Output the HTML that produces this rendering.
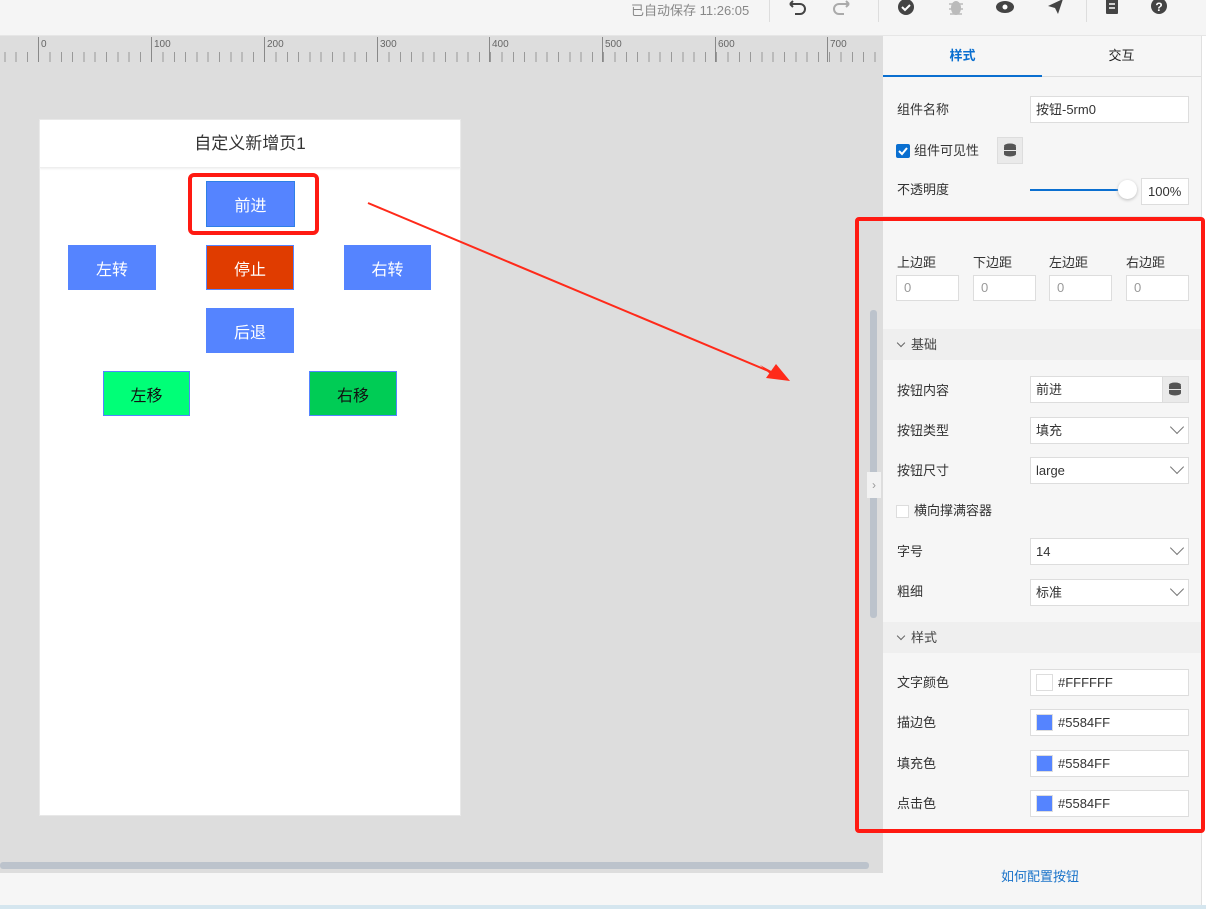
<!DOCTYPE html>
<html><head><meta charset="utf-8"><style>
*{box-sizing:border-box;margin:0;padding:0}
body{width:1206px;height:909px;overflow:hidden;position:relative;background:#dddddd;font-family:"Liberation Sans","Noto Sans CJK SC",sans-serif;font-size:13px;color:#333}
.a{position:absolute}
.top{left:0;top:0;width:1206px;height:36px;background:#f5f5f5;border-bottom:1px solid #e6e6e6}
.ruler{left:0;top:37px;width:883px;height:26px;background:#dddddd}
.btn{position:absolute;color:#fff;font-size:16px;display:flex;align-items:center;justify-content:center;background:#5584ff}
.panel{left:883px;top:36px;width:318px;height:869px;background:#f6f6f6}
.lbl{position:absolute;left:897px;font-size:13px;color:#333}
.inp{position:absolute;left:1030px;width:159px;height:27px;background:#fff;border:1px solid #ddd;font-size:13px;padding-left:5px;line-height:25px;color:#333}
.chev{position:absolute;right:6px;width:10px;height:10px;border-right:1.5px solid #777;border-bottom:1.5px solid #777;transform:rotate(45deg);top:4px}
.sec{position:absolute;left:883px;width:318px;height:31px;background:#efefef;font-size:13px;line-height:31px;padding-left:28px;color:#444}
.sec:before{content:"";position:absolute;left:15px;top:11px;width:5px;height:5px;border-right:1.5px solid #666;border-bottom:1.5px solid #666;transform:rotate(45deg)}
.mi{position:absolute;top:275px;width:63px;height:26px;background:#fff;border:1px solid #ddd;color:#999;padding-left:7px;line-height:24px}
.sw{position:absolute;left:5px;top:4px;width:17px;height:17px;border:1px solid #ddd;background:#5584ff}
</style></head><body>
<div class="a top">
 <div class="a" style="left:631px;top:0;font-size:13px;color:#888">已自动保存 11:26:05</div>
 <div class="a" style="left:769px;top:0;width:1px;height:22px;background:#ddd"></div>
 <div class="a" style="left:878px;top:0;width:1px;height:22px;background:#ddd"></div>
 <div class="a" style="left:1086px;top:0;width:1px;height:22px;background:#ddd"></div>
 <svg class="a" style="left:786px;top:0" width="400" height="20" viewBox="0 0 400 20">
  <path d="M5 6 L2 3 M2 3 L5 0 M2 3 H12 A5 5 0 0 1 12 13 H7" fill="none" stroke="#444" stroke-width="2" transform="translate(2,1)"/>
  <path d="M14 6 L17 3 M17 3 L14 0 M17 3 H7 A5 5 0 0 0 7 13 H12" fill="none" stroke="#aaa" stroke-width="2" transform="translate(46,1)"/>
  <circle cx="120" cy="7" r="8" fill="#444"/><path d="M116 7l3 3 5-5" stroke="#fff" stroke-width="2" fill="none"/>
  <ellipse cx="170" cy="8" rx="5" ry="7" fill="#bbb"/><path d="M163 4h14M163 9h14M164 14l12 0" stroke="#bbb" stroke-width="1.5"/>
  <ellipse cx="219" cy="7" rx="9" ry="6" fill="#444"/><circle cx="219" cy="7" r="2.5" fill="#fff"/>
  <path d="M262 6 L277 -1 L272 14 L269 8 Z" fill="#444"/>
  <rect x="320" y="-2" width="12" height="16" rx="1" fill="#444"/><path d="M323 4h6M323 8h6" stroke="#fff" stroke-width="1.5"/>
  <circle cx="373" cy="6" r="8" fill="#444"/><text x="373" y="11" font-size="12" font-weight="bold" fill="#fff" text-anchor="middle" font-family="Liberation Sans">?</text>
 </svg>
</div>
<div class="a ruler">
 <div class="a" style="left:0;top:15px;width:883px;height:10px;background:repeating-linear-gradient(90deg,transparent 0,transparent 4.3px,#999 4.3px,#999 5.3px,transparent 5.3px,transparent 11.3px)"></div>
 <div class="a" style="left:38px;top:0;height:25px;width:1px;background:#888"></div><div class="a" style="left:41px;top:2px;font-size:10px;color:#666">0</div>
 <div class="a" style="left:151px;top:0;height:25px;width:1px;background:#888"></div><div class="a" style="left:154px;top:2px;font-size:10px;color:#666">100</div>
 <div class="a" style="left:264px;top:0;height:25px;width:1px;background:#888"></div><div class="a" style="left:267px;top:2px;font-size:10px;color:#666">200</div>
 <div class="a" style="left:377px;top:0;height:25px;width:1px;background:#888"></div><div class="a" style="left:380px;top:2px;font-size:10px;color:#666">300</div>
 <div class="a" style="left:489px;top:0;height:25px;width:1px;background:#888"></div><div class="a" style="left:492px;top:2px;font-size:10px;color:#666">400</div>
 <div class="a" style="left:602px;top:0;height:25px;width:1px;background:#888"></div><div class="a" style="left:605px;top:2px;font-size:10px;color:#666">500</div>
 <div class="a" style="left:715px;top:0;height:25px;width:1px;background:#888"></div><div class="a" style="left:718px;top:2px;font-size:10px;color:#666">600</div>
 <div class="a" style="left:827px;top:0;height:25px;width:1px;background:#888"></div><div class="a" style="left:830px;top:2px;font-size:10px;color:#666">700</div>
</div>
<div class="a" style="left:39px;top:119px;width:422px;height:697px;background:#fff;border:1px solid #e8e8e8">
 <div style="height:48px;border-bottom:1px solid #eee;box-shadow:0 1px 2px #eee;text-align:center;line-height:48px;font-size:17px;color:#333">自定义新增页1</div>
</div>
<div class="btn" style="left:206px;top:181px;width:89px;height:46px;border:1px solid #2f7fe6">前进</div>
<div class="a" style="left:188px;top:173px;width:131px;height:62px;border:4px solid #ff1a12;border-radius:6px"></div>
<div class="btn" style="left:68px;top:245px;width:88px;height:45px">左转</div>
<div class="btn" style="left:206px;top:245px;width:88px;height:45px;background:#e03c00;border:1px solid #5584ff">停止</div>
<div class="btn" style="left:344px;top:245px;width:87px;height:45px">右转</div>
<div class="btn" style="left:206px;top:308px;width:88px;height:45px">后退</div>
<div class="btn" style="left:103px;top:371px;width:87px;height:45px;background:#00ff77;color:#111;border:1px solid #5584ff">左移</div>
<div class="btn" style="left:309px;top:371px;width:88px;height:45px;background:#00cc55;color:#111;border:1px solid #5584ff">右移</div>
<svg class="a" style="left:0;top:0" width="883" height="909"><line x1="368" y1="203" x2="778" y2="375" stroke="#ff2a1a" stroke-width="2"/><path d="M790 381 L766 378 L776 364 Z" fill="#ff2a1a"/><path d="M790 381 L760 365 L770 374 Z" fill="#ff2a1a"/></svg>
<div class="a" style="left:0;top:862px;width:869px;height:7px;background:#bcc3cc;border-radius:3px"></div>
<div class="a" style="left:0;top:873px;width:883px;height:32px;background:#f6f6f6"></div>
<div class="a" style="left:0;top:905px;width:1206px;height:4px;background:#d5e6ef"></div>
<div class="a panel"></div>
<div class="a" style="left:1201px;top:36px;width:5px;height:869px;background:#fff;border-left:1px solid #e0e0e0"></div>
<div class="a" style="left:883px;top:36px;width:318px;height:41px;border-bottom:1px solid #ddd">
 <div class="a" style="left:0;top:0;width:159px;height:41px;border-bottom:2px solid #0a6fd0;text-align:center;line-height:40px;color:#0a6fd0;font-weight:bold">样式</div>
 <div class="a" style="left:159px;top:0;width:159px;height:41px;text-align:center;line-height:40px;color:#222">交互</div>
</div>
<div class="lbl" style="top:99px">组件名称</div>
<div class="inp" style="top:96px">按钮-5rm0</div>
<svg class="a" style="left:896px;top:144px" width="14" height="14"><rect width="14" height="14" rx="2" fill="#0a6fd0"/><path d="M3 7l3 3 5-6" stroke="#fff" stroke-width="2" fill="none"/></svg>
<div class="lbl" style="top:140px;left:914px">组件可见性</div>
<div class="a" style="left:997px;top:137px;width:26px;height:27px;background:#eaeaea;border:1px solid #ddd"><svg width="24" height="25"><ellipse cx="12" cy="8" rx="6" ry="2.5" fill="#555"/><rect x="6" y="9" width="12" height="3" fill="#555"/><rect x="6" y="13" width="12" height="3" fill="#555"/><ellipse cx="12" cy="16" rx="6" ry="2.5" fill="#555"/></svg></div>
<div class="lbl" style="top:179px">不透明度</div>
<div class="a" style="left:1030px;top:189px;width:95px;height:2px;background:#0a6fd0"></div>
<div class="a" style="left:1118px;top:180px;width:19px;height:19px;border-radius:50%;background:#fff;box-shadow:0 1px 3px #bbb"></div>
<div class="inp" style="left:1141px;top:178px;width:48px;padding-left:6px">100%</div>
<div class="a" style="left:883px;top:216px;width:318px;height:1px;background:#e4e4e4"></div>
<div class="lbl" style="top:252px">上边距</div><div class="lbl" style="top:252px;left:973px">下边距</div><div class="lbl" style="top:252px;left:1049px">左边距</div><div class="lbl" style="top:252px;left:1126px">右边距</div>
<div class="mi" style="left:896px">0</div><div class="mi" style="left:973px">0</div><div class="mi" style="left:1049px">0</div><div class="mi" style="left:1126px">0</div>
<div class="sec" style="top:329px">基础</div>
<div class="lbl" style="top:380px">按钮内容</div>
<div class="inp" style="top:376px">前进<div class="a" style="right:-1px;top:-1px;width:27px;height:27px;background:#eaeaea;border:1px solid #ddd"><svg width="25" height="25"><ellipse cx="12" cy="8" rx="6" ry="2.5" fill="#555"/><rect x="6" y="9" width="12" height="3" fill="#555"/><rect x="6" y="13" width="12" height="3" fill="#555"/><ellipse cx="12" cy="16" rx="6" ry="2.5" fill="#555"/></svg></div></div>
<div class="lbl" style="top:420px">按钮类型</div><div class="inp" style="top:417px">填充<div class="chev"></div></div>
<div class="lbl" style="top:460px">按钮尺寸</div><div class="inp" style="top:457px">large<div class="chev"></div></div>
<div class="a" style="left:896px;top:505px;width:13px;height:13px;background:#fff;border:1px solid #ddd"></div>
<div class="lbl" style="top:500px;left:914px">横向撑满容器</div>
<div class="lbl" style="top:541px">字号</div><div class="inp" style="top:538px">14<div class="chev"></div></div>
<div class="lbl" style="top:581px">粗细</div><div class="inp" style="top:579px">标准<div class="chev"></div></div>
<div class="sec" style="top:622px">样式</div>
<div class="lbl" style="top:672px">文字颜色</div><div class="inp" style="top:669px;padding-left:27px">#FFFFFF<div class="sw" style="background:#fff"></div></div>
<div class="lbl" style="top:712px">描边色</div><div class="inp" style="top:709px;padding-left:27px">#5584FF<div class="sw"></div></div>
<div class="lbl" style="top:753px">填充色</div><div class="inp" style="top:750px;padding-left:27px">#5584FF<div class="sw"></div></div>
<div class="lbl" style="top:793px">点击色</div><div class="inp" style="top:790px;padding-left:27px">#5584FF<div class="sw"></div></div>
<div class="a" style="left:855px;top:217px;width:350px;height:616px;border:4px solid #ff1a12;border-radius:4px"></div>
<div class="a" style="left:870px;top:310px;width:7px;height:308px;background:#bcc3cc;border-radius:3px"></div>
<div class="a" style="left:867px;top:472px;width:14px;height:26px;background:#f2f2f2;color:#999;font-size:12px;line-height:26px;text-align:center">›</div>
<div class="a" style="left:1001px;top:866px;font-size:13px;color:#1a73c9">如何配置按钮</div>
</body></html>
